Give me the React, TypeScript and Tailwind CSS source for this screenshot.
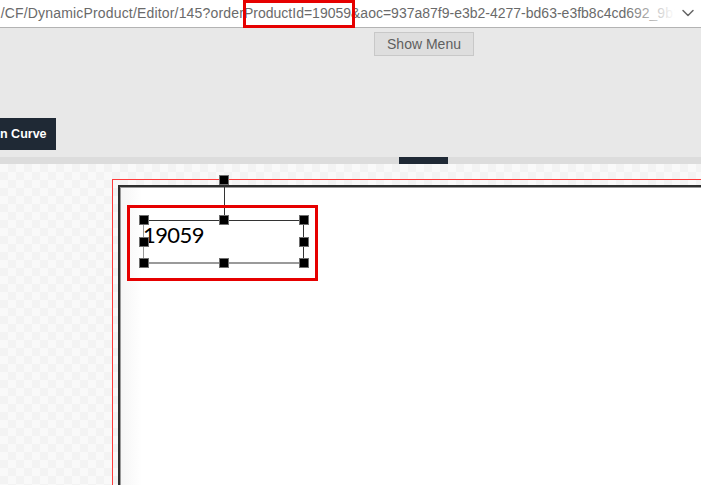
import React from 'react';
import { ChevronDown } from 'lucide-react';

// Handle square used around the selected text element
const Handle: React.FC<{ x: number; y: number }> = ({ x, y }) => (
    <div
        className="absolute w-[10px] h-[10px] bg-black border border-[#6f6f6f]"
        style={{ left: x - 5, top: y - 5 }}
    />
);

const App: React.FC = () => {
    const handles = [
        [144, 220], [224, 220], [304, 220],
        [144, 242], [304, 242],
        [144, 263], [224, 263], [304, 263],
    ];

    return (
        <div className="relative w-[701px] h-[485px] overflow-hidden flex flex-col bg-white font-['Liberation_Sans',Arial,sans-serif]">
            {/* Address bar */}
            <div className="relative h-[28px] shrink-0 bg-white border-b border-[#b3b3b3] flex items-center text-[14px] text-[#6a6a6a] whitespace-nowrap">
                <div className="w-[244px] shrink-0 overflow-hidden flex justify-end">
                    <span className="tracking-[0.17px]">/CF/DynamicProduct/Editor/145?order</span>
                </div>
                <span>ProductId=19059</span>
                <span>&amp;aoc=937a87f9-e3b2-4277-bd63-e3fb8c4cd692_9b1c</span>
                <div className="absolute left-[625px] top-0 h-full w-[50px] bg-gradient-to-r from-white/0 to-white" />
                <div className="absolute left-[675px] top-0 h-full w-[26px] bg-white flex items-center">
                    <ChevronDown size={20} strokeWidth={1.8} className="text-[#666] ml-[3px] -mt-[1px]" />
                </div>
                {/* highlight */}
                <div className="absolute left-[243px] top-0 w-[112px] h-[28px] border-[3px] border-[#e60000]" />
            </div>

            {/* Toolbar area */}
            <div className="h-[129px] shrink-0 bg-[#e8e8e8] flex flex-col">
                <button className="ml-[374px] mt-[4px] w-[100px] h-[24px] bg-[#dedede] border border-[#c8c8c8] text-[14px] text-[#5f5f5f] leading-none">
                    Show Menu
                </button>
                <button className="mt-[62px] w-[56px] h-[32px] bg-[#1f2935] text-white text-[12.5px] font-bold text-left whitespace-nowrap overflow-hidden">
                    n Curve
                </button>
            </div>

            {/* Ruler strip */}
            <div className="h-[7px] shrink-0 bg-[#dcdcdc] flex">
                <div className="ml-[399px] w-[49px] h-full bg-[#1f2935]" />
            </div>

            {/* Canvas */}
            <div className="flex-1 min-h-0 overflow-hidden bg-[#f7f7f7] bg-[conic-gradient(#f3f3f3_25%,#f9f9f9_0_50%,#f3f3f3_0_75%,#f9f9f9_0)] bg-size-[16px_16px] pl-[112px] pt-[15px]">
                <div className="w-[1200px] h-[600px] border border-[#ff3b3b] p-[5px]">
                    <div className="w-full h-full border-t-2 border-l-2 border-[#2e2e2e] shadow-[inset_1px_1px_0_#9a9a9a] bg-gradient-to-r from-[#f5f5f5] to-white to-[22px]" />
                </div>
            </div>

            {/* Selected text element */}
            <div className="absolute left-[224px] top-[185px] w-px h-[35px] bg-[#333]" />
            <div className="absolute left-[144px] top-[220px] w-[160px] h-px bg-[#333]" />
            <div className="absolute left-[143px] top-[220px] w-px h-[43px] bg-[#999]" />
            <div className="absolute left-[303px] top-[220px] w-px h-[43px] bg-[#333]" />
            <div className="absolute left-[144px] top-[262px] w-[160px] h-[2px] bg-[#9a9a9a]" />
            <div className="absolute left-[143px] top-[224px] font-['Lato',sans-serif] text-[22px] leading-none text-black tracking-[-0.6px]">
                19059
            </div>
            <Handle x={224} y={180} />
            {handles.map(([x, y], i) => (
                <Handle key={i} x={x} y={y} />
            ))}

            {/* highlight */}
            <div className="absolute left-[127px] top-[205px] w-[191px] h-[76px] border-[3px] border-[#e60000]" />
        </div>
    );
};

export default App;
